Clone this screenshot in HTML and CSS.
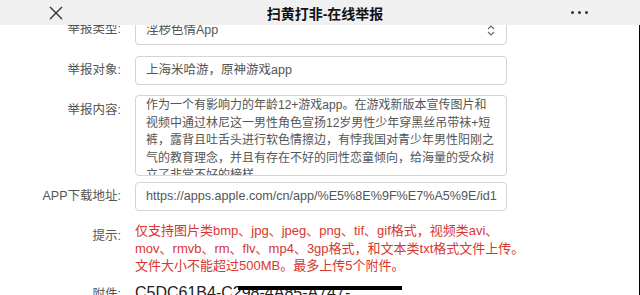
FILE: index.html
```html
<!DOCTYPE html>
<html lang="zh-CN">
<head>
    <meta charset="UTF-8">
    <meta name="viewport" content="width=device-width, initial-scale=1.0">
    <title>扫黄打非-在线举报</title>
    <link rel="stylesheet" href="styles.css">
</head>
<body>

    <div class="navbar">
        <div class="nav-close">
            <svg width="14" height="14" viewBox="0 0 14 14">
                <path d="M1 1 L13 13 M13 1 L1 13" stroke="#333" stroke-width="1.4" fill="none"/>
            </svg>
        </div>
        <div class="nav-title">扫黄打非-在线举报</div>
        <div class="nav-more">
            <span class="dot"></span><span class="dot"></span><span class="dot"></span>
        </div>
    </div>

    <div class="page">
        <div class="report-form">
            <div class="form-row">
                <div class="form-label">举报类型:</div>
                <div class="form-control select-control">
                    <span>淫秽色情App</span>
                    <svg class="select-arrow" width="8" height="11" viewBox="0 0 8 11">
                        <path d="M1 4 L4 1 L7 4 M1 7 L4 10 L7 7" stroke="#666" stroke-width="1.1" fill="none"/>
                    </svg>
                </div>
            </div>

            <div class="form-row">
                <div class="form-label">举报对象:</div>
                <div class="form-control">上海米哈游，原神游戏app</div>
            </div>

            <div class="form-row">
                <div class="form-label">举报内容:</div>
                <div class="form-control textarea-control">
                    作为一个有影响力的年龄12+游戏app。在游戏新版本宣传图片和<br>
                    视频中通过林尼这一男性角色宣扬12岁男性少年穿黑丝吊带袜+短<br>
                    裤，露背且吐舌头进行软色情擦边，有悖我国对青少年男性阳刚之<br>
                    气的教育理念，并且有存在不好的同性恋童倾向，给海量的受众树<br>
                    立了非常不好的榜样
                </div>
            </div>

            <div class="form-row row-tight">
                <div class="form-label">APP下载地址:</div>
                <div class="form-control url-control">https://apps.apple.com/cn/app/%E5%8E%9F%E7%A5%9E/id1</div>
            </div>

            <div class="form-row">
                <div class="form-label">提示:</div>
                <div class="form-tip">
                    仅支持图片类bmp、jpg、jpeg、png、tif、gif格式，视频类avi、<br>
                    mov、rmvb、rm、flv、mp4、3gp格式，和文本类txt格式文件上传。<br>
                    文件大小不能超过500MB。最多上传5个附件。
                </div>
            </div>

            <div class="form-row row-attach">
                <div class="form-label">附件:</div>
                <div class="attach-name">
                    C5DC61B4-C298-4A85-A747-
                    <span class="attach-mark"></span>
                </div>
            </div>
        </div>
    </div>

</body>
</html>
```

FILE: styles.css
```css
body {
    margin: 0;
    font-family: 'Liberation Sans', 'Noto Sans CJK SC', sans-serif;
    color: #555;
    background-color: #fff;
    overflow: hidden;
}
.navbar {
    position: fixed;
    top: 0;
    left: 0;
    right: 0;
    height: 25px;
    display: flex;
    align-items: center;
    justify-content: space-between;
    background-color: #f0f0f0;
    z-index: 2;
}
.nav-close {
    width: 14px;
    height: 14px;
    margin-left: 49px;
}
.nav-close svg {
    display: block;
}
.nav-title {
    font-size: 14px;
    font-weight: bold;
    color: #111;
    margin-left: 16px;
}
.nav-more {
    display: flex;
    gap: 4px;
    margin-right: 52px;
}
.nav-more .dot {
    width: 3px;
    height: 3px;
    border-radius: 50%;
    background-color: #333;
}
.page {
    height: 295px;
    border-right: 1px solid #000;
    box-sizing: border-box;
}
.report-form {
    padding-top: 15px;
}
.form-row {
    display: grid;
    grid-template-columns: 121px 372px;
    column-gap: 14px;
    align-items: start;
    margin-bottom: 11px;
}
.form-row.row-tight {
    margin-top: -5px;
}
.form-label {
    text-align: right;
    font-size: 12.5px;
    line-height: 29px;
    color: #555;
}
.form-control {
    height: 29px;
    box-sizing: border-box;
    border: 1px solid #d4d4d4;
    border-radius: 4px;
    padding: 0 10px;
    font-size: 12.5px;
    line-height: 27px;
    color: #555;
    white-space: nowrap;
    overflow: hidden;
}
.select-control {
    height: 30px;
    line-height: 28px;
    display: flex;
    justify-content: space-between;
    align-items: center;
}
.select-arrow {
    margin-right: 1px;
}
.textarea-control {
    height: 81px;
    margin-top: -1px;
    padding: 1px 10px 0;
    font-size: 12px;
    line-height: 17.5px;
    white-space: normal;
}
.url-control {
    font-size: 12.6px;
}
.form-tip {
    font-size: 13px;
    line-height: 17.5px;
    color: #d9362e;
    white-space: nowrap;
}
.row-attach {
    margin-top: -6px;
}
.attach-name {
    position: relative;
    font-size: 16px;
    line-height: 29px;
    color: #222;
    white-space: nowrap;
    margin-top: -2px;
}
.attach-mark {
    position: absolute;
    left: 103px;
    top: 8px;
    width: 164px;
    height: 4px;
    background-color: #000;
}
```
